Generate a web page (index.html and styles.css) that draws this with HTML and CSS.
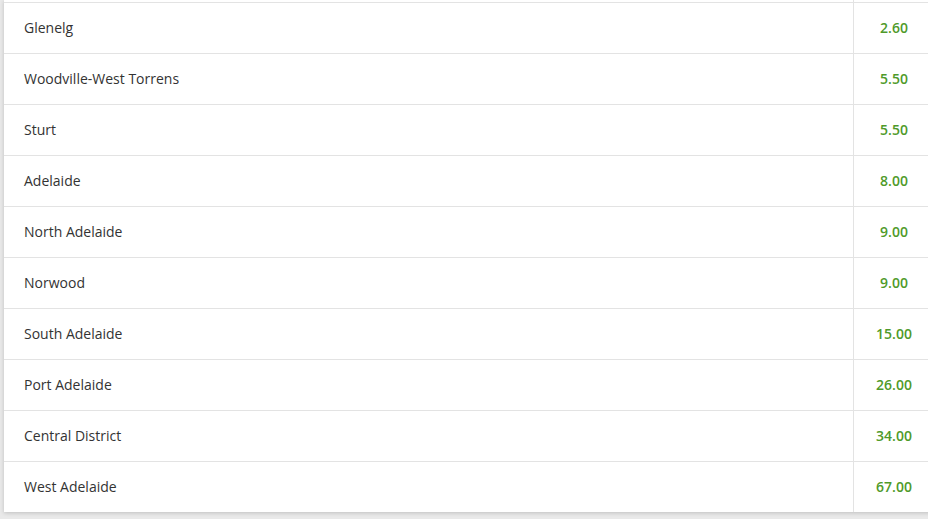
FILE: index.html
```html
<!DOCTYPE html>
<html>
<head>
<meta charset="utf-8">
<link rel="stylesheet" href="styles.css">
</head>
<body>
<div class="card">
  <div class="row spacer"><div class="name"></div><div class="val"></div></div>
  <div class="row"><div class="name">Glenelg</div><div class="val">2.60</div></div>
  <div class="row"><div class="name">Woodville-West Torrens</div><div class="val">5.50</div></div>
  <div class="row"><div class="name">Sturt</div><div class="val">5.50</div></div>
  <div class="row"><div class="name">Adelaide</div><div class="val">8.00</div></div>
  <div class="row"><div class="name">North Adelaide</div><div class="val">9.00</div></div>
  <div class="row"><div class="name">Norwood</div><div class="val">9.00</div></div>
  <div class="row"><div class="name">South Adelaide</div><div class="val">15.00</div></div>
  <div class="row"><div class="name">Port Adelaide</div><div class="val">26.00</div></div>
  <div class="row"><div class="name">Central District</div><div class="val">34.00</div></div>
  <div class="row"><div class="name">West Adelaide</div><div class="val">67.00</div></div>
</div>
</body>
</html>
```
FILE: styles.css
```css
html, body {
  margin: 0;
  padding: 0;
  background: #e9e9e9;
  overflow: hidden;
}
body {
  width: 928px;
  height: 519px;
  font-family: "Open Sans", "Liberation Sans", sans-serif;
  font-size: 14px;
  color: #333333;
}
.card {
  margin-left: 4px;
  width: 930px;
  background: #ffffff;
  box-shadow: 0 1px 4px rgba(0, 0, 0, 0.18);
}
.row {
  display: grid;
  grid-template-columns: 849px 81px;
  border-top: 1px solid #e3e3e3;
  height: 50px;
}
.row.spacer {
  border-top: none;
  height: 2px;
}
.name {
  padding-left: 20px;
  line-height: 50px;
  white-space: nowrap;
}
.val {
  border-left: 1px solid #e3e3e3;
  text-align: center;
  line-height: 50px;
  font-weight: 600;
  color: #4f9a2a;
}
```
